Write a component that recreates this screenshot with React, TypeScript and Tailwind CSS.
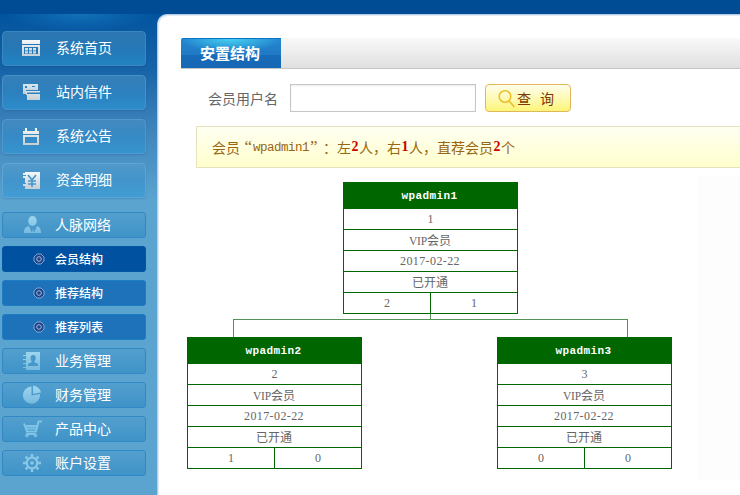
import React from 'react';

type IconProps = { children: React.ReactNode; soft?: boolean };

function Icon({ children, soft }: IconProps) {
  const id = soft ? 'softFill' : 'paleFill';
  return (
    <svg width="20" height="20" viewBox="0 0 20 20" fill={`url(#${id})`} className="shrink-0">
      <defs>
        <linearGradient id={id} gradientUnits="userSpaceOnUse" x1="0" y1="0" x2="0" y2="19">
          <stop offset="0" stopColor={soft ? '#a0d7ef' : '#f8fafb'} />
          <stop offset="1" stopColor={soft ? '#75b9df' : '#c3cbd1'} />
        </linearGradient>
      </defs>
      {children}
    </svg>
  );
}

const bigItems = [
  {
    label: '系统首页',
    cls: 'from-[#2c76b1] via-[#2578b6] to-[#2283c2] border-[#3b87c0]',
    icon: (
      <Icon>
        <path d="M1 1h18v4H1z" />
        <path fillRule="evenodd" d="M1 6h18v11H1zM3 8v7h14V8z" />
        <path d="M4 9h3v2.500H4zM8 9h3v2.500H8zM12 9h3v2.500h-3zM4 12.200h3v2.300H4zM8 12.200h3v2.300H8zM12 12.200h3v2.300h-3z" />
      </Icon>
    ),
  },
  {
    label: '站内信件',
    cls: 'from-[#367fb8] via-[#2b80bd] to-[#2b8dca] border-[#4591c8]',
    icon: (
      <Icon>
        <path fillRule="evenodd" d="M2 1h15v6H5v4H2zM4 3v2h2V3zM11 3v1h3V3z" opacity=".85" />
        <path fillRule="evenodd" d="M5 8h14v9H6v-5H5zM6 9.500v1.500h13V9.500z" />
      </Icon>
    ),
  },
  {
    label: '系统公告',
    cls: 'from-[#4389bf] via-[#368ac5] to-[#3794ce] border-[#4e9ace]',
    icon: (
      <Icon>
        <path fillRule="evenodd" d="M2 8h16v10H2zM4 10v6h12v-6z" />
        <path d="M4 1h2v3h8V1h2v3h2v3H2V4h2z" />
      </Icon>
    ),
  },
  {
    label: '资金明细',
    cls: 'from-[#5199c9] via-[#4294cb] to-[#419dd4] border-[#5ca7d4]',
    icon: (
      <Icon>
        <path d="M4 1h15v17H4v-3H2v-2h3v-1H4V7H2V5h3V4H2V2h2z" />
        <path d="M7 4l4 5 4-5M11 9v7M7 10h8M7 13h8" fill="none" stroke="#4198ce" strokeWidth="1.700" />
      </Icon>
    ),
  },
];

const subItems = [
  { label: '会员结构', cls: 'bg-[#0051a0] border-[#0057a6]' },
  { label: '推荐结构', cls: 'bg-[#1e72b9] border-[#1c7cc4]' },
  { label: '推荐列表', cls: 'bg-[#1e72b9] border-[#1c7cc4]' },
];

const smallItems = [
  {
    label: '业务管理',
    icon: (
      <Icon soft>
        <path d="M4 1h14v18H4v-2H1v-1h3v-3H1v-1h3V9H1V8h3V5H1V4h3z" />
        <path d="M11 4c4 0 3 5 1 7l4 2v2H6v-2l4-2C8 8 8 4 11 4" fill="#4797c9" />
      </Icon>
    ),
  },
  {
    label: '财务管理',
    icon: (
      <Icon soft>
        <path d="M9.500 1.500v9l8.500-1.500A8.600 8.600 0 1 1 9.500 1.500z" />
        <path d="M11 .800a8 8 0 0 1 8 6.700l-8 1.500z" />
      </Icon>
    ),
  },
  {
    label: '产品中心',
    icon: (
      <Icon soft>
        <path
          d="M3 7h12M4 9.500h10M2 4.500l3 8h9l2.500-10h3.500M4 15h10"
          fill="none"
          stroke="#80c4e5"
          strokeWidth="2"
        />
        <circle cx="5" cy="16.500" r="1.800" />
        <circle cx="13.500" cy="16.500" r="1.800" />
      </Icon>
    ),
  },
  {
    label: '账户设置',
    icon: (
      <Icon soft>
        <g stroke="#88c7e7" fill="none">
          <circle cx="10" cy="10" r="5.300" strokeWidth="2.200" />
          <path
            d="M10 1v3M10 16v3M1 10h3M16 10h3M3.600 3.600l2.200 2.200M14.200 14.200l2.200 2.200M16.400 3.600l-2.200 2.200M5.800 14.200l-2.200 2.200"
            strokeWidth="2.400"
          />
        </g>
        <circle cx="10" cy="10" r="1.800" />
      </Icon>
    ),
  },
];

function SmallButton({ label, icon }: { label: string; icon: React.ReactNode }) {
  return (
    <div className="flex h-[26px] w-[144px] items-center rounded-[3px] border border-[#3089c4] bg-linear-to-b from-[#539fce] to-[#3e93c8] pl-[19px]">
      {icon}
      <span className="ml-[13px] pb-[2px] text-[14px] leading-none whitespace-nowrap text-white">{label}</span>
    </div>
  );
}

function Sidebar() {
  return (
    <aside className="flex h-[481px] w-[157px] shrink-0 flex-col bg-[radial-gradient(ellipse_75px_17px_at_80px_0px,#1171b8_0%,transparent_100%),linear-gradient(#02539f_0px,#1763a8_55px,#3c82ba_110px,#5ba4d0_186px,#5ba4d0_100%)] pt-[17px] pl-[2px]">
      <div className="flex flex-col gap-[9px]">
        {bigItems.map((it) => (
          <div
            key={it.label}
            className={`flex h-[35px] w-[144px] items-center rounded-[4px] border bg-linear-to-b pl-[18px] shadow-[0_1px_2px_rgba(0,60,120,0.2)] ${it.cls}`}
          >
            {it.icon}
            <span className="ml-[15px] pb-[3px] text-[14px] leading-none whitespace-nowrap text-white">{it.label}</span>
          </div>
        ))}
      </div>
      <div className="mt-[14px] flex flex-col gap-[8px]">
        <SmallButton
          label="人脉网络"
          icon={
            <Icon soft>
              <ellipse cx="10.500" cy="6" rx="4.300" ry="5" />
              <path d="M7 11l3 7 1-5 1 5 3-7c3 1 4 3 4 7H2c0-4 1-6 5-7z" />
            </Icon>
          }
        />
        {subItems.map((it) => (
          <div key={it.label} className={`flex h-[26px] w-[144px] items-center rounded-[3px] border pl-[30px] ${it.cls}`}>
            <svg width="12" height="12" viewBox="0 0 12 12" fill="#1b4489" stroke="#a3bde0" className="shrink-0">
              <path d="M4 1h4l3 3v4l-3 3h-4l-3-3v-4z" strokeWidth=".800" />
              <circle cx="6" cy="6" r="2.300" />
            </svg>
            <span className="ml-[10px] pb-px text-[12px] leading-none font-medium whitespace-nowrap text-white">{it.label}</span>
          </div>
        ))}
        {smallItems.map((it) => (
          <SmallButton key={it.label} label={it.label} icon={it.icon} />
        ))}
      </div>
    </aside>
  );
}

type NodeProps = { name: string; count: string; left: string; right: string };

function MemberNode({ name, count, left, right }: NodeProps) {
  return (
    <div className="w-[175px] border border-[#006600] text-center text-[12px] leading-[20px] text-[#666]">
      <div className="h-[26px] bg-[#006600] pr-[2px] font-['Liberation_Mono'] text-[11px] leading-[26px] font-bold tracking-[0.4px] text-white">
        {name}
      </div>
      <div className="h-[21px] border-b border-[#006600] font-['Liberation_Serif']">{count}</div>
      <div className="h-[21px] border-b border-[#006600] pr-px">
        <span className="font-['Liberation_Serif'] text-[11.5px] tracking-[-0.2px]">VIP</span>会员
      </div>
      <div className="h-[21px] border-b border-[#006600] pr-px font-['Liberation_Serif'] tracking-[0.4px]">2017-02-22</div>
      <div className="h-[21px] border-b border-[#006600] pr-px">已开通</div>
      <div className="flex h-[20px] font-['Liberation_Serif']">
        <div className="w-[87px] border-r border-[#006600]">{left}</div>
        <div className="flex-1">{right}</div>
      </div>
    </div>
  );
}

function Tree() {
  return (
    <div className="mt-[14px] ml-[7px] flex w-[485px] shrink-0 flex-col">
      <div className="flex justify-center pl-[2px]">
        <MemberNode name="wpadmin1" count="1" left="2" right="1" />
      </div>
      <div className="ml-[243px] h-[5px] w-px bg-[#559255]" />
      <div className="ml-[46px] h-[18px] w-[395px] border-x border-t border-[#559255]" />
      <div className="flex justify-between">
        <MemberNode name="wpadmin2" count="2" left="1" right="0" />
        <MemberNode name="wpadmin3" count="3" left="0" right="0" />
      </div>
    </div>
  );
}

function Content() {
  return (
    <main className="h-[481px] flex-1 overflow-hidden rounded-tl-[10px] border-t border-l border-[#b4cbe4] bg-white pt-[23px] pl-[22px] shadow-[inset_1px_1px_1px_#dfe9f4]">
      <div className="ml-px flex h-[31px] border-b border-[#c6c6c6] bg-linear-to-b from-[#f9f9f9] to-[#e0e0e0]">
        <div className="h-[30px] w-[100px] rounded-tl-[2px] border-t border-[#0875c8] bg-[radial-gradient(ellipse_50px_13px_at_50%_0,#45d0f0_0%,transparent_100%),linear-gradient(#2587d0_0%,#2079c4_55%,#176bb8_56%,#1767b4_100%)] pl-[19px] text-[15px] leading-[28px] font-bold text-white">
          安置结构
        </div>
      </div>
      <div className="mt-[15px] flex h-[28px] items-center pl-[28px]">
        <span className="w-[82px] pb-px text-[14px] leading-none text-[#666]">会员用户名</span>
        <input className="h-[28px] w-[186px] border border-[#c6c6c6] bg-white shadow-[inset_0_1px_2px_rgba(0,0,0,0.08)] outline-none" />
        <button className="ml-[9px] flex h-[28px] w-[86px] items-center rounded-[4px] border border-[#dfb75c] bg-linear-to-b from-[#fffdeb] to-[#fdf576] pl-[12px] text-[14px] text-[#803800]">
          <svg width="18" height="19" viewBox="0 0 18 19" fill="none" stroke="#efc02d" className="shrink-0">
            <circle cx="7" cy="7.500" r="5.800" strokeWidth="1.600" />
            <path d="M11 12l5.500 6" strokeWidth="1.800" />
          </svg>
          <span className="ml-px leading-none">查</span>
          <span className="ml-[9px] leading-none">询</span>
        </button>
      </div>
      <div className="mt-[14px] ml-[16px] flex h-[42px] border border-r-0 border-[#e5e3bf] bg-linear-to-b from-[#fffff2] to-[#ffffcc] pl-[15px] text-[14px] leading-[40px] whitespace-nowrap text-[#996611]">
        <span className="w-[28px]">会员</span>
        <span className="w-[13px] pr-px text-right font-['Liberation_Serif'] text-[17px]">“</span>
        <span className="w-[56px] font-['Liberation_Mono'] text-[12.5px] leading-[42px] tracking-[-0.5px]">wpadmin1</span>
        <span className="w-[14px] pl-px font-['Liberation_Serif'] text-[17px]">”</span>
        <span className="w-[14px]">：</span>
        左<Count n="2" />人，右<Count n="1" />人，直荐会员<Count n="2" />个
      </div>
      <div className="flex">
        <Tree />
        <div className="mt-[7px] ml-[25px] h-[305px] flex-1 bg-[#fdfdfd]" />
      </div>
    </main>
  );
}

function Count({ n }: { n: string }) {
  return <b className="w-[8px] text-center font-['Liberation_Serif'] text-[14px] text-[#cc0000]">{n}</b>;
}

export default function App() {
  return (
    <div className="h-[495px] w-[740px] overflow-hidden bg-[#004c94] pt-[14px] font-['Noto_Sans_CJK_SC',sans-serif]">
      <div className="flex bg-[#02539f]">
        <Sidebar />
        <Content />
      </div>
    </div>
  );
}
